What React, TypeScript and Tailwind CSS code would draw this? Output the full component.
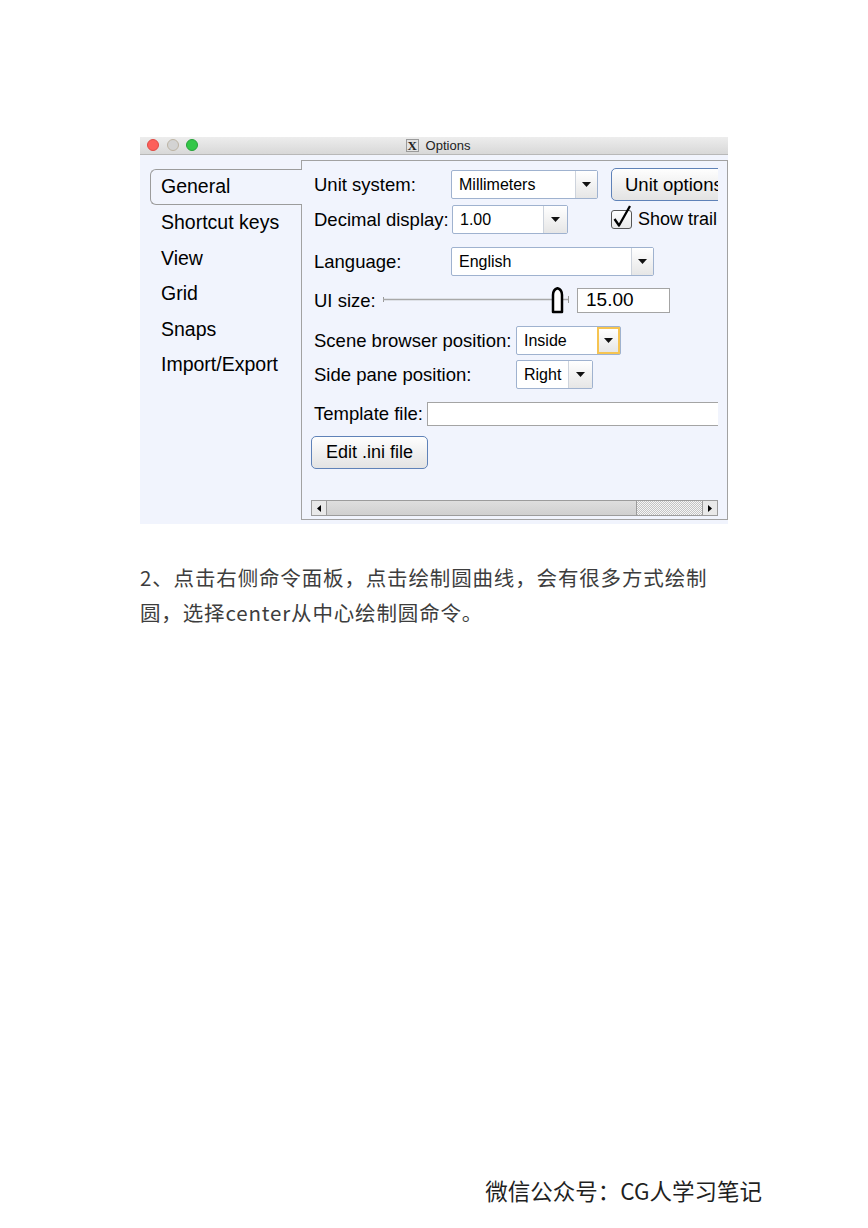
import React from "react";

function Arrow() {
  return (
    <svg width="9" height="5" viewBox="0 0 9 5">
      <path d="M0 0 L9 0 L4.5 5 Z" fill="#111" />
    </svg>
  );
}

function Select({
  value,
  w,
  btn,
  focus = false,
}: {
  value: string;
  w: string;
  btn: string;
  focus?: boolean;
}) {
  return (
    <div className={`flex h-[29px] shrink-0 ${w} rounded-[2px] border border-[#9fb2cf] bg-white`}>
      <div className="flex flex-1 items-center pl-[7px] text-[16px] text-black">{value}</div>
      {focus ? (
        <div className={`flex ${btn} items-center justify-center border-2 border-[#f6c451] bg-gradient-to-b from-white to-[#e6e6e6]`}>
          <Arrow />
        </div>
      ) : (
        <div className={`flex ${btn} items-center justify-center border-l border-[#cdd3dc] bg-gradient-to-b from-white to-[#e6e6e6]`}>
          <Arrow />
        </div>
      )}
    </div>
  );
}

function Slider() {
  return (
    <svg width="186" height="27" viewBox="0 0 186 27" className="shrink-0 overflow-visible">
      <line x1="0.5" y1="10" x2="0.5" y2="15" stroke="#9a9a9a" strokeWidth="1" />
      <line x1="0" y1="12.5" x2="169" y2="12.5" stroke="#a8a8a8" strokeWidth="1.5" />
      <line x1="180" y1="12.5" x2="185" y2="12.5" stroke="#a8a8a8" strokeWidth="1.5" />
      <line x1="185.5" y1="9" x2="185.5" y2="16" stroke="#9a9a9a" strokeWidth="1" />
      <path
        d="M170 25 L170 8 Q170 2.5 174.5 1.2 Q179 2.5 179 8 L179 25 Z"
        fill="#ffffff"
        stroke="#000"
        strokeWidth="2.5"
        strokeLinejoin="round"
      />
    </svg>
  );
}

function Tab({ label }: { label: string }) {
  return (
    <div className="flex h-[35.5px] items-center pl-[11px] text-[19.5px] text-black">{label}</div>
  );
}

export default function App() {
  return (
    <div className="relative h-[1228px] w-[868px] overflow-hidden bg-white">
      <div className="pl-[140px] pt-[137px]">
        <div className="w-[588px] font-['Liberation_Sans',Arial,sans-serif]">
          {/* title bar */}
          <div className="relative flex h-[18px] items-center border-b border-[#b8b8b8] bg-gradient-to-b from-[#ededed] to-[#d8d8d8]">
            <div className="absolute left-[7px] top-[2px] flex gap-[7.5px]">
              <div className="h-[12px] w-[12px] rounded-full border border-[#df4a44] bg-[#fc605b]" />
              <div className="h-[12px] w-[12px] rounded-full border border-[#bcb3a3] bg-[#d3d3d3]" />
              <div className="h-[12px] w-[12px] rounded-full border border-[#27a23a] bg-[#33c748]" />
            </div>
            <div className="flex w-full items-center justify-center pl-[8px]">
              <div className="flex h-[13px] w-[13px] items-center justify-center border border-[#9a9a9a] bg-[#e4e4e4] font-['Liberation_Serif',serif] text-[13px] font-bold leading-none text-[#222]">
                X
              </div>
              <span className="ml-[7px] text-[13px] text-[#222]">Options</span>
            </div>
          </div>
          {/* body */}
          <div className="flex h-[369px] bg-[#f1f4fd] pb-[4px] pt-[5px]">
            {/* tabs */}
            <div className="w-[161px] pl-[10px] pt-[9px]">
              <div className="relative z-10 -mr-[1px] flex h-[36px] items-center rounded-l-[6px] border-y border-l border-[#9c9c9c] bg-[#f1f4fd] pl-[10px] text-[19.5px] text-black">
                General
              </div>
              <Tab label="Shortcut keys" />
              <Tab label="View" />
              <Tab label="Grid" />
              <Tab label="Snaps" />
              <Tab label="Import/Export" />
            </div>
            {/* panel */}
            <div className="flex h-[360px] w-[427px] border border-[#a2a2a2]">
              <div className="flex w-[416px] flex-col overflow-hidden pl-[9px] text-[18.5px] text-black">
                {/* row 1 */}
                <div className="mt-[7px] flex h-[33px] items-center">
                  <div className="w-[140px] shrink-0 pl-[3px]">Unit system:</div>
                  <Select value="Millimeters" w="w-[147px]" btn="w-[22px]" />
                  <div className="ml-[13px] flex h-[33px] w-[130px] shrink-0 items-center whitespace-nowrap rounded-[5px] border border-[#5f82b8] bg-gradient-to-b from-[#fefefe] to-[#e3e3e3] pl-[13px] text-[18.5px]">
                    Unit options
                  </div>
                </div>
                {/* row 2 */}
                <div className="mt-[4px] flex h-[29px] items-center">
                  <div className="w-[141px] shrink-0 pl-[3px]">Decimal display:</div>
                  <Select value="1.00" w="w-[116px]" btn="w-[24px]" />
                  <div className="relative ml-[43px] h-[19px] w-[21px] shrink-0 rounded-[3px] border-[1.5px] border-[#555] bg-gradient-to-b from-white to-[#e9e9e9]">
                    <svg
                      width="24"
                      height="26"
                      viewBox="0 0 24 26"
                      className="absolute -top-[8px] left-[-1px] overflow-visible"
                    >
                      <path d="M3.5 16 L8 22.5 L19 3" fill="none" stroke="#000" strokeWidth="2.3" strokeLinejoin="round" />
                    </svg>
                  </div>
                  <div className="ml-[6px] shrink-0 whitespace-nowrap text-[18px]">Show trail</div>
                </div>
                {/* row 3 */}
                <div className="mt-[13px] flex h-[29px] items-center">
                  <div className="w-[140px] shrink-0 pl-[3px]">Language:</div>
                  <Select value="English" w="w-[203px]" btn="w-[22px]" />
                </div>
                {/* row 4 */}
                <div className="mt-[12px] flex h-[25px] items-center">
                  <div className="w-[72px] shrink-0 pl-[3px]">UI size:</div>
                  <Slider />
                  <div className="ml-[8px] flex h-[25px] w-[93px] shrink-0 items-center border border-[#a4a4a4] bg-white pl-[8px] text-[19px]">
                    15.00
                  </div>
                </div>
                {/* row 5 */}
                <div className="mt-[13px] flex h-[29px] items-center">
                  <div className="w-[205px] shrink-0 pl-[3px]">Scene browser position:</div>
                  <Select value="Inside" w="w-[105px]" btn="w-[23px]" focus />
                </div>
                {/* row 6 */}
                <div className="mt-[5px] flex h-[29px] items-center">
                  <div className="w-[205px] shrink-0 pl-[3px]">Side pane position:</div>
                  <Select value="Right" w="w-[77px]" btn="w-[24px]" />
                </div>
                {/* row 7 */}
                <div className="mt-[13px] flex h-[24px] items-center">
                  <div className="w-[116px] shrink-0 pl-[3px]">Template file:</div>
                  <div className="h-[24px] w-[320px] shrink-0 border border-[#a4a4a4] bg-white" />
                </div>
                {/* row 8 */}
                <div className="mt-[10px] flex h-[33px] items-center">
                  <div className="flex h-[33px] w-[117px] items-center justify-center rounded-[5px] border border-[#5f82b8] bg-gradient-to-b from-[#fefefe] to-[#e3e3e3] text-[18px]">
                    Edit .ini file
                  </div>
                </div>
                {/* scrollbar */}
                <div className="mt-[31px] flex h-[16px] w-[407px] shrink-0 border border-[#9c9c9c] bg-[#ececec]">
                  <div className="flex w-[15px] items-center justify-center border-r border-[#9c9c9c] bg-[#e9e9e9]">
                    <svg width="4" height="7" viewBox="0 0 4 7">
                      <path d="M4 0 L0 3.5 L4 7 Z" fill="#000" />
                    </svg>
                  </div>
                  <div className="w-[310px] border-r border-[#9c9c9c] bg-gradient-to-b from-[#dedede] to-[#d0d0d0]" />
                  <div className="flex-1 bg-[repeating-conic-gradient(#c4c4c4_0%_25%,#f6f6f6_0%_50%)] bg-[length:2px_2px]" />
                  <div className="flex w-[15px] items-center justify-center border-l border-[#9c9c9c] bg-[#e9e9e9]">
                    <svg width="4" height="7" viewBox="0 0 4 7">
                      <path d="M0 0 L4 3.5 L0 7 Z" fill="#000" />
                    </svg>
                  </div>
                </div>
              </div>
            </div>
          </div>
        </div>
      </div>

      <p className="ml-[140px] mt-[35.5px] font-['Noto_Sans_CJK_SC',sans-serif] text-[20.5px] leading-[35px] tracking-[0.85px] text-[#3d3d3d]">
        2、点击右侧命令面板，点击绘制圆曲线，会有很多方式绘制
        <br />
        圆，选择center从中心绘制圆命令。
      </p>

      <div className="mt-[545px] flex justify-end pr-[106px] font-['Noto_Sans_CJK_SC',sans-serif] text-[22.5px] leading-[30px] text-[#1f1f1f]">
        微信公众号：CG人学习笔记
      </div>
    </div>
  );
}
